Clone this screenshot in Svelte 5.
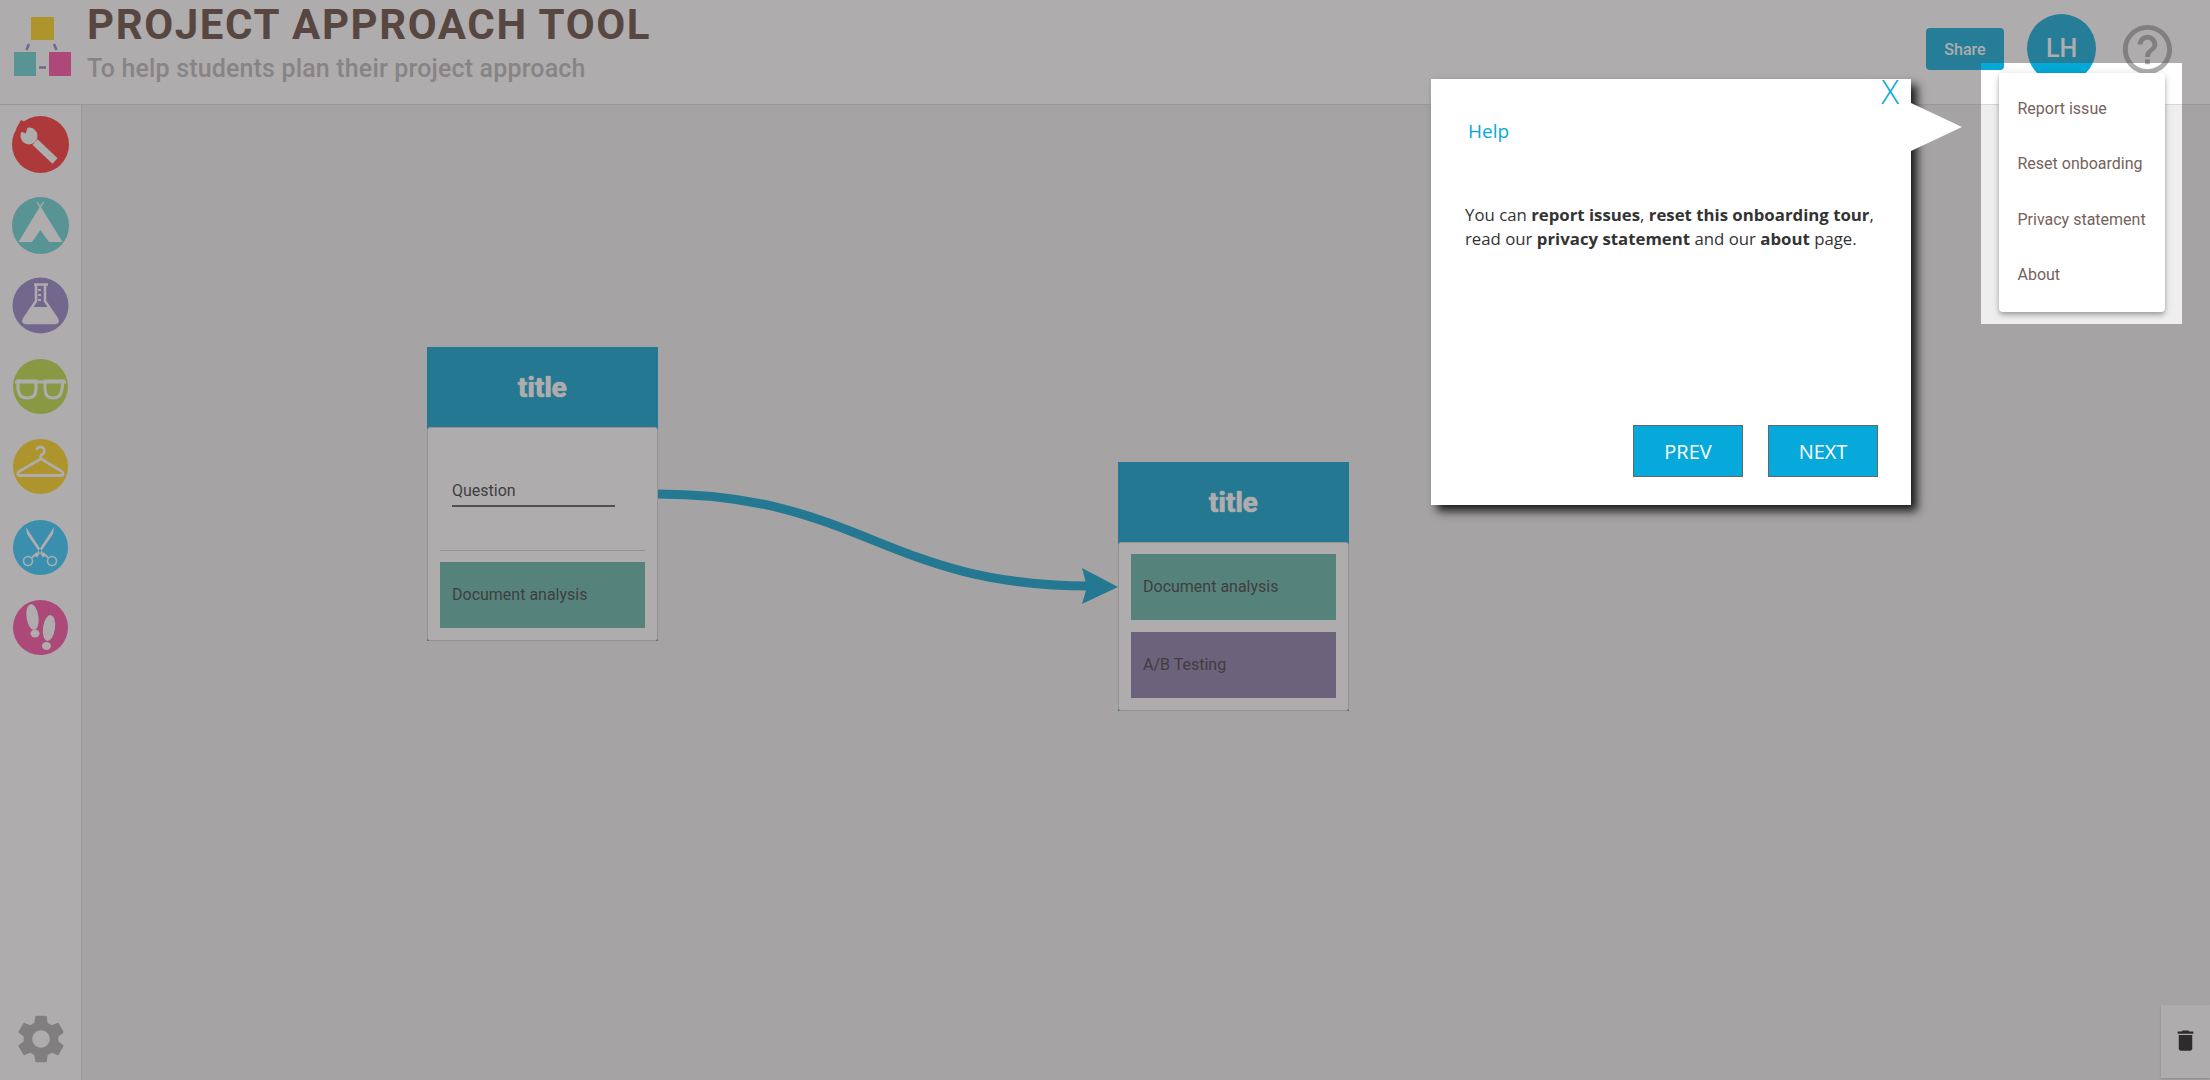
<script>
  const menu = ['Report issue', 'Reset onboarding', 'Privacy statement', 'About'];
</script>

<div class="app">
  <header class="top">
    <svg class="logo" width="72" height="80" viewBox="0 0 72 80" aria-hidden="true">
      <rect x="31" y="17" width="23" height="23" fill="#ffd212" />
      <rect x="14" y="52" width="22" height="24" fill="#5ed3cf" />
      <rect x="49" y="52" width="22" height="24" fill="#fc48a0" />
      <path d="M29 44l-2.500 6M54 44l2.500 6M39 67.500h7" stroke="#8f82c6" stroke-width="2.500" fill="none" />
    </svg>
    <div class="brand">
      <h1>PROJECT APPROACH TOOL</h1>
      <p>To help students plan their project approach</p>
    </div>
    <div class="actions">
      <button class="share">Share</button>
      <div class="avatar">LH</div>
      <svg class="help" width="59" height="59" viewBox="0 0 24 24" aria-hidden="true">
        <path d="M11 18h2v-2h-2v2zm1-16C6.480 2 2 6.480 2 12s4.480 10 10 10 10-4.480 10-10S17.520 2 12 2zm0 18c-4.410 0-8-3.590-8-8s3.590-8 8-8 8 3.590 8 8-3.590 8-8 8zm0-14c-2.210 0-4 1.790-4 4h2c0-1.100.9-2 2-2s2 .9 2 2c0 2-3 1.750-3 5h2c0-2.250 3-2.500 3-5 0-2.210-1.790-4-4-4z" />
      </svg>
    </div>
  </header>

  <div class="main">
    <aside class="side">
      <svg class="tool" viewBox="0 0 57 57" aria-hidden="true">
        <circle cx="28.500" cy="28.500" r="28.500" fill="#ff2c2c" />
        <path d="M23 26 43 45" stroke="#fff" stroke-width="7.500" />
        <circle cx="17" cy="20" r="8.500" fill="#fff" />
        <path d="M4 13 13.500 17.500 17 8 9 4Z" fill="#ff2c2c" />
      </svg>
      <svg class="tool" viewBox="0 0 57 57" aria-hidden="true">
        <circle cx="28.500" cy="28.500" r="28.500" fill="#5ed3cf" />
        <path d="M28.300 9 50.500 45H37L28.300 33 20 45H6.500Z" fill="#fff" />
        <path d="M25 5l3.300 5 3.300-5" stroke="#fff" stroke-width="1.300" fill="none" />
      </svg>
      <svg class="tool" viewBox="0 0 57 57" aria-hidden="true">
        <circle cx="28.500" cy="28.500" r="28" fill="#9082c6" />
        <path d="M22 7.500H36M24 8V24L12 42Q10 46 14 46H43Q47 46 45 42L33 24V8" stroke="#fff" stroke-width="2.500" fill="none" />
        <path d="M19 30H38L45 42Q47 46 43 46H14Q10 46 12 42Z" fill="#fff" />
        <path d="M26 13h3M26 18h3M26 23h3" stroke="#fff" stroke-width="1.800" />
      </svg>
      <svg class="tool" viewBox="0 0 57 57" aria-hidden="true">
        <circle cx="28.500" cy="28.500" r="27.500" fill="#bbdc3c" />
        <path d="M3 24H54" stroke="#fff" stroke-width="3" />
        <path d="M6 23H24V31Q24 40 15 40 7 40 6 31ZM33 23H51L50 31Q49 40 41 40 33 40 33 31Z" stroke="#fff" stroke-width="3" fill="none" />
      </svg>
      <svg class="tool" viewBox="0 0 57 57" aria-hidden="true">
        <circle cx="28.500" cy="28.500" r="27.500" fill="#ffd212" />
        <path d="M24.500 12a4 4 0 1 1 5.500 4.500q-1.500.7-1.500 4L50 33.500Q53 37.500 49 37.500H8Q4 37.500 7 33.500L28.500 21" stroke="#fff" stroke-width="2.800" fill="none" />
      </svg>
      <svg class="tool" viewBox="0 0 57 57" aria-hidden="true">
        <circle cx="28.500" cy="28.500" r="27.500" fill="#27caff" />
        <path d="M14 8 33 37 31 38.500 15 15ZM42 8 23 37 25 38.500 41 15Z" fill="#fff" />
        <circle cx="16" cy="42" r="4.500" fill="none" stroke="#fff" stroke-width="1.600" />
        <circle cx="40" cy="42" r="4.500" fill="none" stroke="#fff" stroke-width="1.600" />
        <path d="M20 38.500 25 34M36 38.500 31 34" stroke="#fff" stroke-width="2" />
      </svg>
      <svg class="tool" viewBox="0 0 57 57" aria-hidden="true">
        <circle cx="28.500" cy="28.500" r="27.500" fill="#fc48a0" />
        <ellipse cx="20.500" cy="18" rx="6" ry="13" fill="#fff" transform="rotate(-8 20.500 18)" />
        <ellipse cx="23" cy="34.500" rx="4.500" ry="4" fill="#fff" />
        <ellipse cx="37" cy="29" rx="6" ry="13" fill="#fff" transform="rotate(8 37 29)" />
        <ellipse cx="34.500" cy="47" rx="4.500" ry="4" fill="#fff" />
      </svg>
      <svg class="gear" width="58" height="58" viewBox="0 0 24 24" aria-hidden="true">
        <path d="M19.140 12.940c.04-.3.06-.61.06-.94 0-.32-.02-.64-.07-.94l2.030-1.580c.18-.14.23-.41.12-.61l-1.920-3.320c-.12-.22-.37-.29-.59-.22l-2.390.96c-.5-.38-1.030-.7-1.620-.94l-.36-2.540c-.04-.24-.24-.41-.48-.41h-3.840c-.24 0-.43.17-.47.41l-.36 2.540c-.59.24-1.130.57-1.620.94l-2.390-.96c-.22-.08-.47 0-.59.22L2.740 8.870c-.12.21-.08.47.12.61l2.030 1.580c-.05.3-.09.63-.09.94s.02.64.07.94l-2.030 1.580c-.18.14-.23.41-.12.61l1.920 3.320c.12.22.37.29.59.22l2.390-.96c.5.38 1.030.7 1.620.94l.36 2.540c.05.24.24.41.48.41h3.840c.24 0 .44-.17.47-.41l.36-2.540c.59-.24 1.130-.56 1.620-.94l2.390.96c.22.08.47 0 .59-.22l1.920-3.320c.12-.22.07-.47-.12-.61l-2.010-1.580zM12 15.600c-1.980 0-3.600-1.620-3.600-3.600s1.620-3.600 3.600-3.600 3.600 1.620 3.600 3.600-1.620 3.600-3.600 3.600z" />
      </svg>
    </aside>

    <section class="canvas">
      <svg class="link" width="2210" height="1080" aria-hidden="true">
        <path d="M657 494C860 494 885 586 1090 586" fill="none" stroke="#00a0cc" stroke-width="9" />
        <path d="M1118 587 1082 568 1087 587 1082 604Z" fill="#00a0cc" />
      </svg>

      <article class="node first">
        <div class="node-head">title</div>
        <div class="node-body">
          <div class="question"><span>Question</span></div>
          <hr />
          <div class="method teal">Document analysis</div>
        </div>
      </article>

      <article class="node second">
        <div class="node-head">title</div>
        <div class="node-body list">
          <div class="method teal">Document analysis</div>
          <div class="method purple">A/B Testing</div>
        </div>
      </article>

      <div class="trash">
        <svg width="27" height="27" viewBox="0 0 24 24" aria-hidden="true">
          <path d="M6 19c0 1.100.9 2 2 2h8c1.100 0 2-.9 2-2V7H6v12zM19 4h-3.500l-1-1h-5l-1 1H5v2h14V4z" />
        </svg>
      </div>
    </section>
  </div>

  <div class="spot">
    <ul class="menu">
      {#each menu as item}
        <li>{item}</li>
      {/each}
    </ul>
  </div>

  <div class="tour">
    <span class="pointer"></span>
    <span class="close">X</span>
    <h2>Help</h2>
    <p>You can <b>report issues</b>, <b>reset this onboarding tour</b>, read our <b>privacy statement</b> and our <b>about</b> page.</p>
    <div class="tour-actions">
      <button>PREV</button>
      <button>NEXT</button>
    </div>
  </div>
</div>

<style>
  :global(body) {
    margin: 0;
    overflow: hidden;
    font-family: Roboto, sans-serif;
  }
  .app {
    position: relative;
    width: 2210px;
    height: 1080px;
    overflow: hidden;
    display: flex;
    flex-direction: column;
    background: #fff;
  }
  .top {
    height: 104px;
    flex: none;
    box-sizing: content-box;
    display: flex;
    align-items: flex-start;
    border-top: 1px solid #d8d8d8;
    border-bottom: 1px solid #d8d8d8;
    background: #fff;
    margin-top: -1px;
  }
  .logo {
    flex: none;
    margin-right: 15px;
    width: 72px;
  }
  .brand {
    flex: 1;
  }
  h1 {
    margin: 0;
    font-size: 42px;
    line-height: 50px;
    font-weight: 700;
    color: #604438;
    letter-spacing: 1.6px;
  }
  .brand p {
    margin: 4px 0 0;
    font-size: 25px;
    line-height: 30px;
    font-weight: 500;
    letter-spacing: 0.16px;
    color: #b8b6b6;
  }
  .actions {
    display: flex;
    align-items: center;
    height: 98px;
    padding-right: 33px;
  }
  .share {
    width: 78px;
    height: 42px;
    margin-right: 23px;
    border: 0;
    border-radius: 4px;
    background: #04a9d8;
    color: #fff;
    font: 500 16px Roboto, sans-serif;
    padding: 0;
  }
  .avatar {
    width: 69px;
    height: 69px;
    border-radius: 50%;
    background: #04a9d8;
    color: #fff;
    font-size: 25px;
    font-weight: 500;
    display: flex;
    align-items: center;
    justify-content: center;
    margin-right: 22px;
    margin-top: -1px;
  }
  .help {
    fill: #adadad;
    flex: none;
  }
  .main {
    flex: 1;
    display: flex;
    min-height: 0;
  }
  .side {
    width: 81px;
    flex: none;
    box-sizing: content-box;
    border-right: 1px solid #dcdcdc;
    display: flex;
    flex-direction: column;
    align-items: center;
    gap: 23.500px;
    padding-top: 11px;
    padding-bottom: 12px;
    background: #fff;
  }
  .tool {
    width: 57px;
    height: 57px;
    flex: none;
  }
  .gear {
    margin-top: auto;
    fill: #aaa;
    flex: none;
  }
  .canvas {
    flex: 1;
    background: #eeeeee;
  }
  .link {
    position: absolute;
    left: 0;
    top: 0;
  }
  .node {
    position: absolute;
    width: 231px;
    box-sizing: border-box;
    background: #00a0cc;
  }
  .first {
    left: 427px;
    top: 347px;
  }
  .second {
    left: 1118px;
    top: 462px;
  }
  .node-head {
    height: 80px;
    color: #fff;
    font-size: 28px;
    font-weight: 700;
    text-shadow: 0 0 1px #fff, 0 0 1px #fff;
    display: flex;
    align-items: center;
    justify-content: center;
  }
  .node-body {
    box-sizing: border-box;
    background: #fff;
    border: 1px solid #d0d0d0;
    border-radius: 3px;
    padding: 0 12px 12px;
    display: flex;
    flex-direction: column;
  }
  .node-body.list {
    padding-top: 11px;
    gap: 12px;
  }
  .question {
    height: 122px;
    box-sizing: border-box;
    padding: 51px 0 0 12px;
    font-size: 16px;
    color: #333;
  }
  .question span {
    display: block;
    width: 163px;
    height: 26px;
    line-height: 24px;
    border-bottom: 2px solid #555;
    box-sizing: content-box;
  }
  hr {
    width: 100%;
    margin: 0 0 11px;
    border: 0;
    border-top: 1px solid #d0d0d0;
  }
  .method {
    height: 66px;
    box-sizing: border-box;
    padding: 0 0 2px 12px;
    display: flex;
    align-items: center;
    font-size: 16px;
    color: #333;
  }
  .teal {
    background: #5cb4a5;
  }
  .purple {
    background: #8376a5;
  }
  .trash {
    position: absolute;
    right: 0;
    bottom: 2px;
    width: 49px;
    height: 73px;
    background: #fff;
    box-shadow: 0 1px 2px rgba(0, 0, 0, 0.2);
    display: flex;
    align-items: center;
    justify-content: center;
    fill: #111;
  }
  .trash svg {
    margin-top: -2px;
  }
  .spot {
    position: absolute;
    left: 1981px;
    top: 63px;
    width: 201px;
    height: 261px;
    box-shadow: 0 0 0 3000px rgba(78, 74, 76, 0.46);
  }
  .menu {
    position: absolute;
    left: 18px;
    top: 10px;
    width: 166px;
    height: 239px;
    box-sizing: border-box;
    margin: 0;
    padding: 8px 0;
    list-style: none;
    background: #fff;
    border-radius: 4px;
    box-shadow: 0 2px 4px -1px rgba(0, 0, 0, 0.2), 0 4px 5px 0 rgba(0, 0, 0, 0.14), 0 1px 10px 0 rgba(0, 0, 0, 0.12);
  }
  .menu li {
    height: 55.300px;
    padding-left: 18.500px;
    display: flex;
    align-items: center;
    font-size: 16px;
    color: #75625b;
    white-space: nowrap;
  }
  .tour {
    position: absolute;
    left: 1431px;
    top: 79px;
    width: 480px;
    height: 426px;
    box-sizing: border-box;
    padding: 38px 33px 28px 34px;
    background: #fff;
    box-shadow: 6px 6px 9px rgba(0, 0, 0, 0.85);
    display: flex;
    flex-direction: column;
    font-family: 'Open Sans', sans-serif;
  }
  .pointer {
    position: absolute;
    left: 480px;
    top: 24px;
    width: 51px;
    height: 48px;
    background: #fff;
    clip-path: polygon(0 0, 100% 50%, 0 100%);
  }
  .close {
    position: absolute;
    right: 12px;
    top: -9px;
    color: #06a9d9;
    font-size: 33px;
    line-height: 44px;
    font-weight: 300;
  }
  h2 {
    margin: 0 0 0 3px;
    color: #06a9d9;
    font-size: 19px;
    line-height: 28px;
    font-weight: 400;
  }
  .tour p {
    margin: 58px 0 0;
    font-size: 16.800px;
    line-height: 24px;
    color: #333;
    font-weight: 400;
  }
  .tour b {
    font-weight: 700;
  }
  .tour-actions {
    margin-top: auto;
    display: flex;
    justify-content: flex-end;
    gap: 25px;
  }
  .tour-actions button {
    width: 110px;
    height: 52px;
    border: 1px solid #666;
    background: #06a9d9;
    color: #fff;
    font: 400 20px 'Open Sans', sans-serif;
    padding: 0;
  }
</style>
